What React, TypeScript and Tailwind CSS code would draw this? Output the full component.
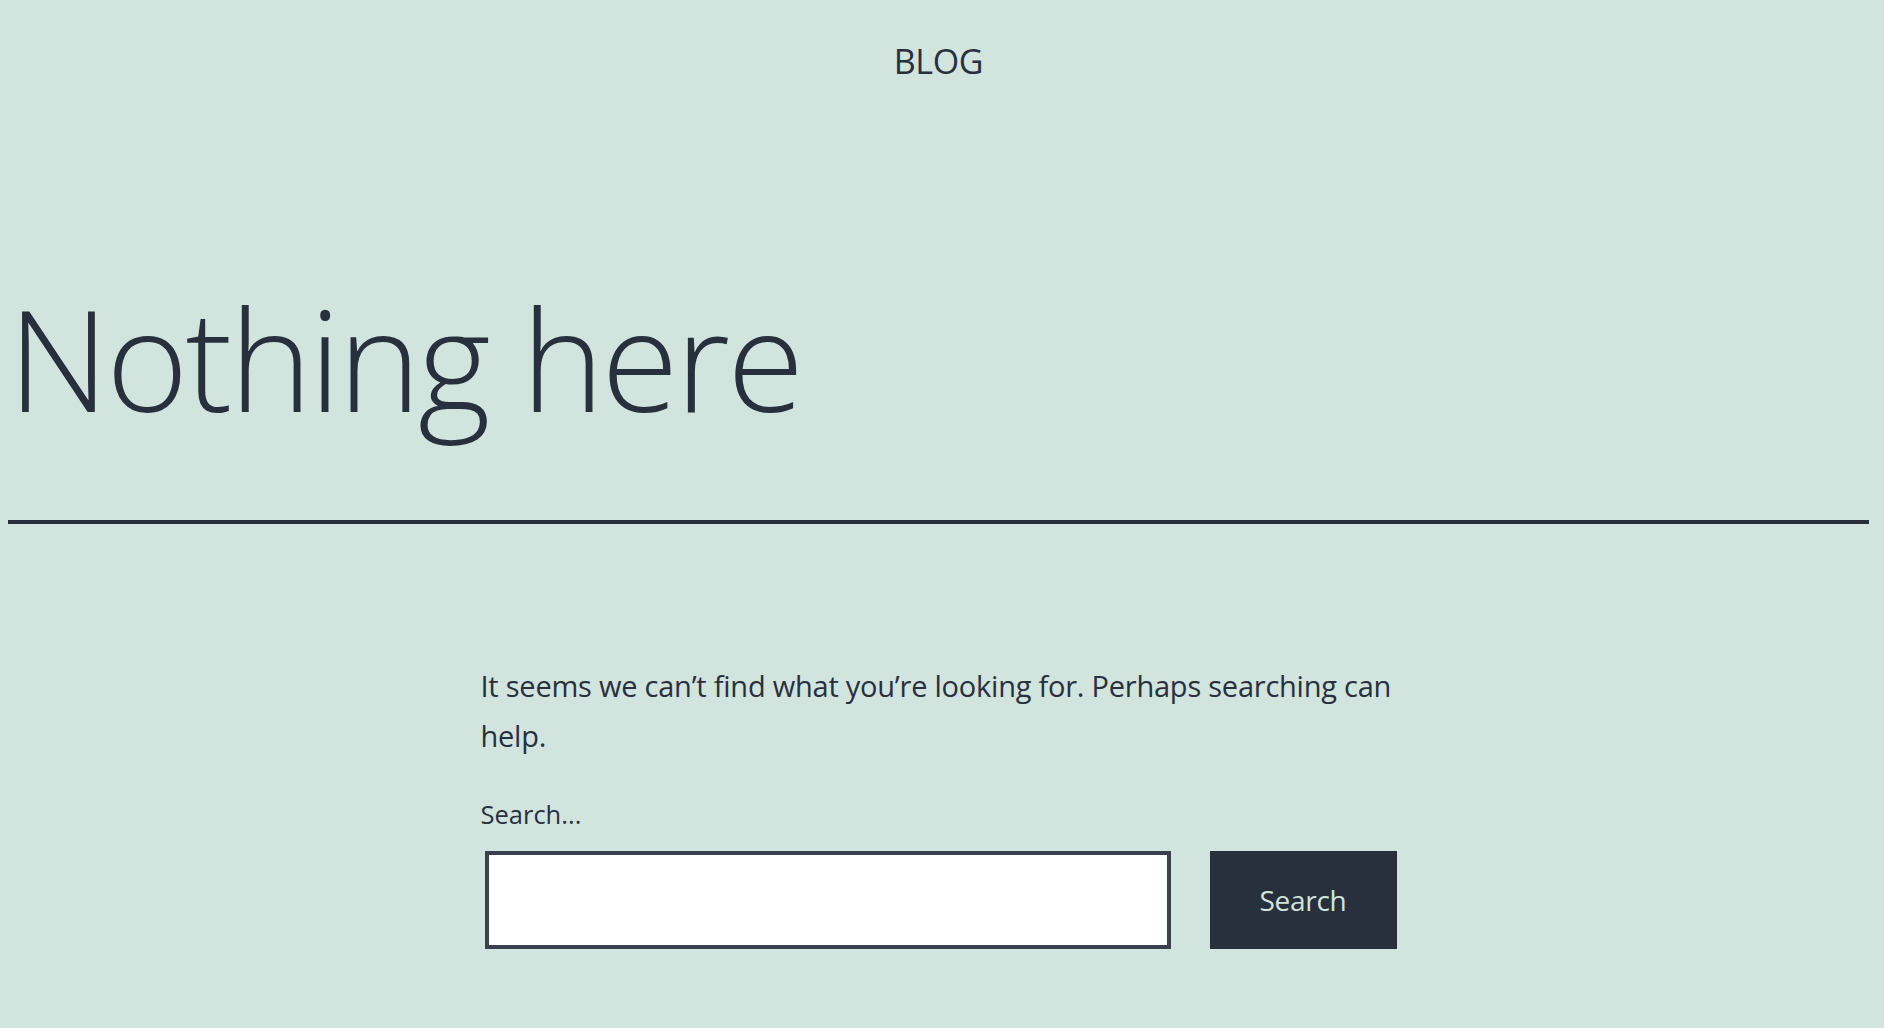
export default function App() {
  return (
    <div className="min-h-screen bg-[#d1e4dd] font-['Open_Sans',sans-serif] text-[#28303d]">
      <header className="flex justify-center pl-[8px] pr-[15px] pt-[43px]">
        <a href="#" className="text-[34px] leading-[36px] tracking-[-0.01em] uppercase">
          Blog
        </a>
      </header>

      <main className="pl-[8px] pr-[15px]">
        <h1 className="mt-[209px] text-[140px] font-light leading-none tracking-[-0.02em]">Nothing here</h1>
        <hr className="mt-[92px] border-0 border-b-4 border-[#28303d]" />

        <div className="mx-auto mt-[137px] w-[916px]">
          <p className="w-[940px] text-[29px] leading-[50px] tracking-[-0.008em]">
            It seems we can’t find what you’re looking for. Perhaps searching can help.
          </p>

          <form className="mt-[34px]" onSubmit={(e) => e.preventDefault()}>
            <label htmlFor="search" className="block text-[25.5px] leading-[38px]">
              Search...
            </label>
            <div className="mt-[18px] flex items-stretch">
              <input
                id="search"
                type="search"
                className="ml-[4px] h-[98px] w-[686px] border-4 border-[#39414d] bg-white px-4 text-[30px] outline-none"
              />
              <button
                type="submit"
                className="ml-[39px] h-[98px] w-[187px] bg-[#28303d] text-[28px] tracking-[-0.01em] text-[#d1e4dd]"
              >
                Search
              </button>
            </div>
          </form>
        </div>
      </main>
    </div>
  );
}
